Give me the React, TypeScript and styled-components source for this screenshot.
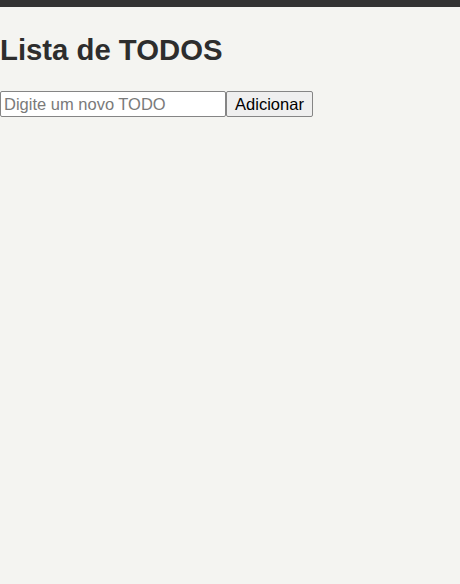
import React, { useState } from "react";
import styled, { createGlobalStyle } from "styled-components";

const Global = createGlobalStyle`
  html, body { margin: 0; padding: 0; background: #f4f4f1; }
  body { font-family: "Liberation Sans", Arial, sans-serif; color: #2b2b2b; }
`;

const TopBar = styled.div`
  height: 7px;
  background: #333333;
`;

const Main = styled.main`
  display: flex;
  flex-direction: column;
`;

const Title = styled.h1`
  font-size: 29.3px;
  font-weight: bold;
  margin: 26px 0 25px;
  line-height: 33px;
  color: #2d2d2d;
`;

const Form = styled.form`
  display: flex;
  align-items: stretch;
`;

const Input = styled.input`
  box-sizing: border-box;
  width: 226px;
  height: 26px;
  padding: 1px 3px;
  font-family: "Liberation Sans", Arial, sans-serif;
  font-size: 16.5px;
  border: 1px solid #858585;
  border-radius: 2px;
  background: #ffffff;
  color: #222;
  &::placeholder { color: #7a7a7a; }
`;

const Button = styled.button`
  box-sizing: border-box;
  width: 87px;
  height: 26px;
  padding: 1px 6px;
  font-family: "Liberation Sans", Arial, sans-serif;
  font-size: 16.5px;
  color: #000;
  background: #efefef;
  border: 1px solid #858585;
  border-radius: 2px;
`;

export default function App() {
  const [text, setText] = useState("");
  return (
    <>
      <Global />
      <TopBar />
      <Main>
        <Title>Lista de TODOS</Title>
        <Form onSubmit={(e) => e.preventDefault()}>
          <Input
            placeholder="Digite um novo TODO"
            value={text}
            onChange={(e) => setText(e.target.value)}
          />
          <Button type="submit">Adicionar</Button>
        </Form>
      </Main>
    </>
  );
}
